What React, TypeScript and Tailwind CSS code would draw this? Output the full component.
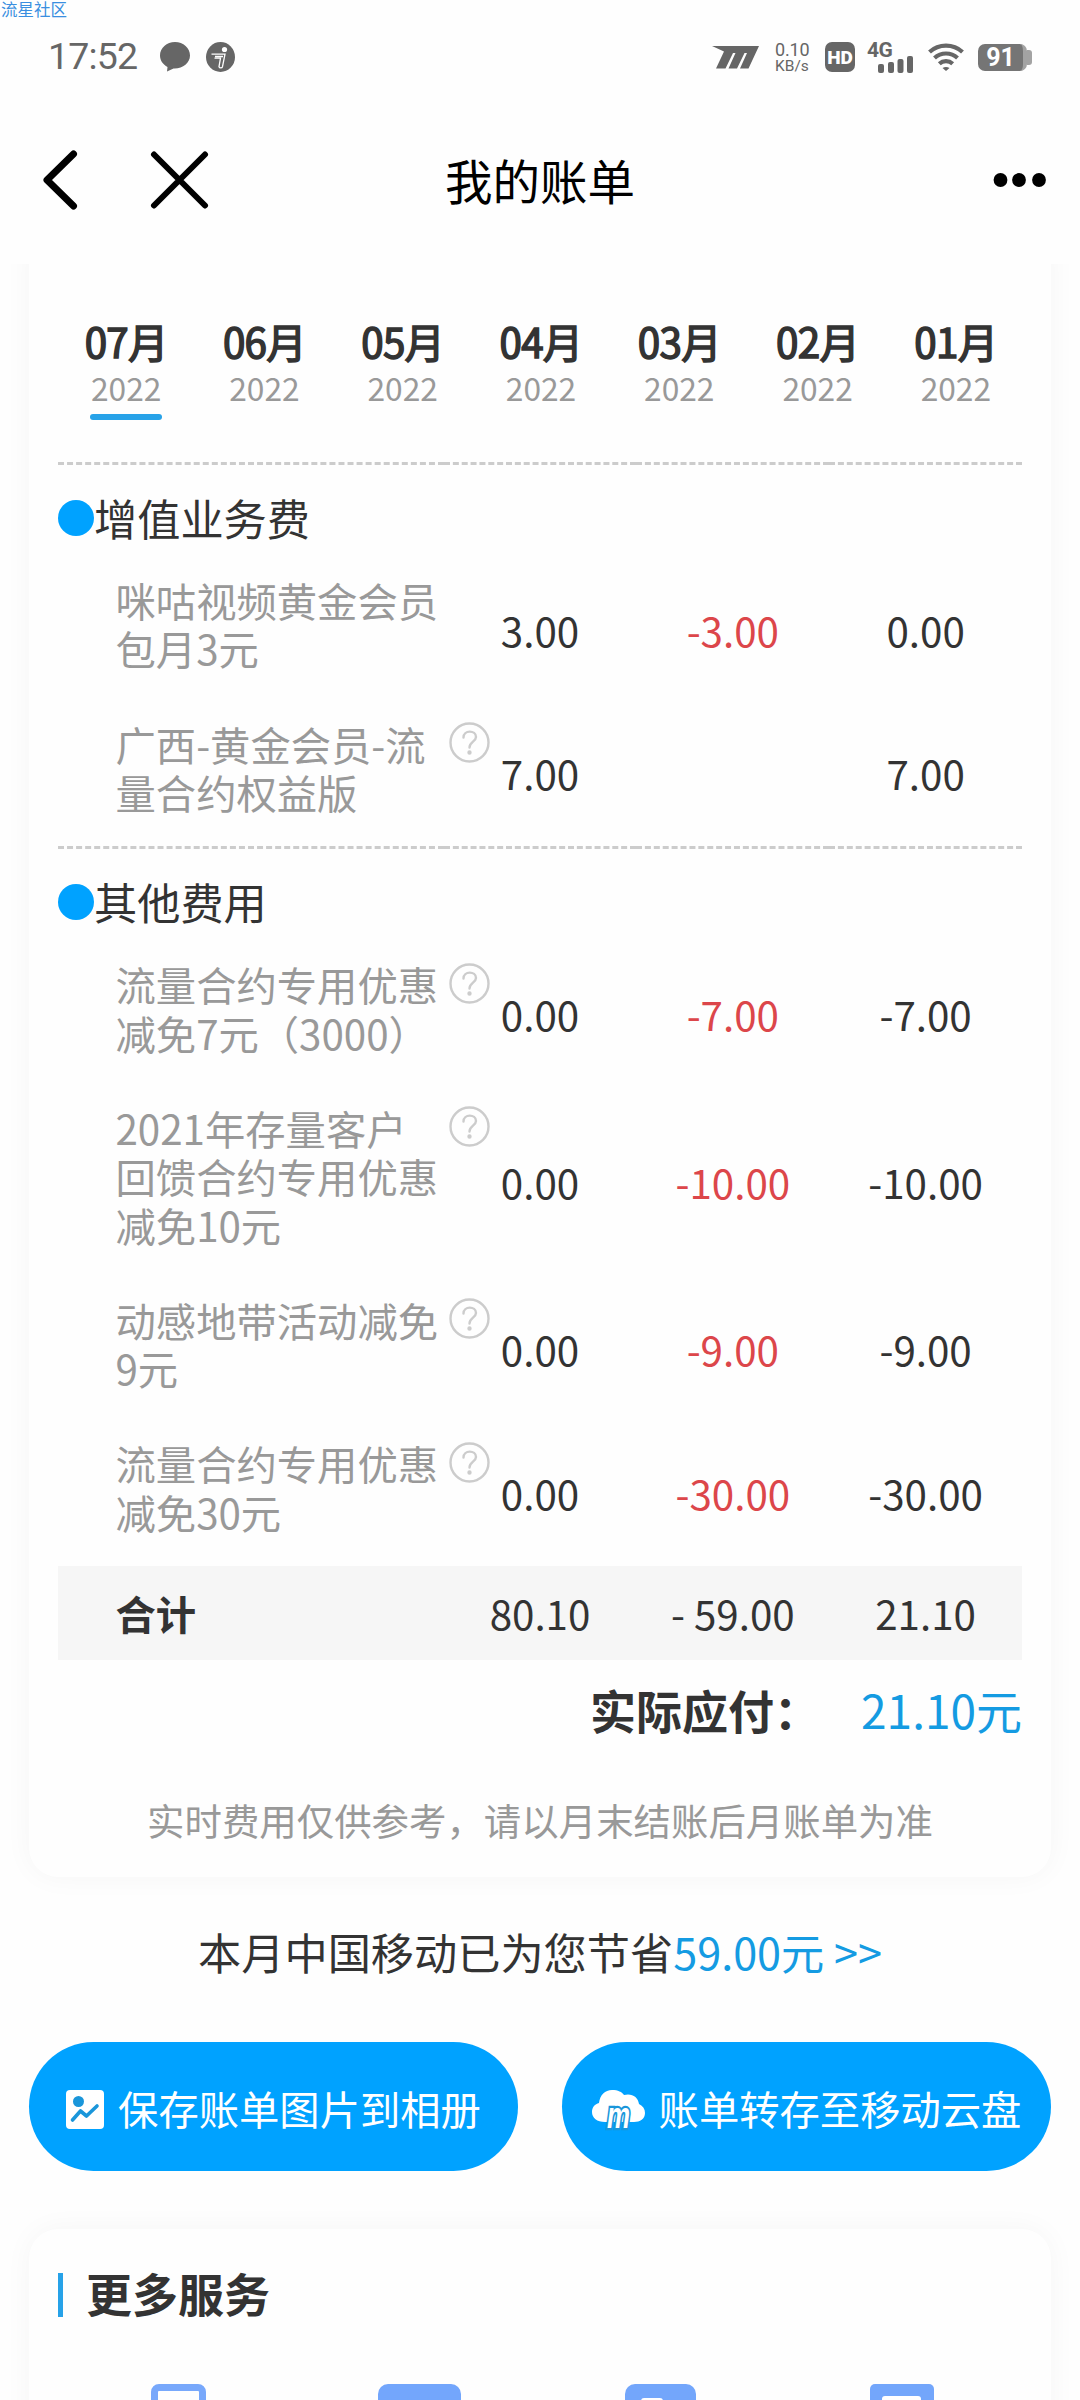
import React from 'react';

interface BillItem {
    name: string;
    help?: boolean;
    amount: string;
    discount?: string;
    actual: string;
}

interface BillSection {
    title: string;
    items: BillItem[];
}

const MONTHS = ['07', '06', '05', '04', '03', '02', '01'];

const SECTIONS: BillSection[] = [
    {
        title: '增值业务费',
        items: [
            { name: '咪咕视频黄金会员包月3元', amount: '3.00', discount: '-3.00', actual: '0.00' },
            { name: '广西-黄金会员-流量合约权益版', help: true, amount: '7.00', actual: '7.00' },
        ],
    },
    {
        title: '其他费用',
        items: [
            { name: '流量合约专用优惠减免7元（3000）', help: true, amount: '0.00', discount: '-7.00', actual: '-7.00' },
            { name: '2021年存量客户回馈合约专用优惠减免10元', help: true, amount: '0.00', discount: '-10.00', actual: '-10.00' },
            { name: '动感地带活动减免9元', help: true, amount: '0.00', discount: '-9.00', actual: '-9.00' },
            { name: '流量合约专用优惠减免30元', help: true, amount: '0.00', discount: '-30.00', actual: '-30.00' },
        ],
    },
];

function StatusBar() {
    return (
        <div className="h-[114px] shrink-0 px-[48px] flex items-center justify-between text-[#666]">
            <div className="flex items-center">
                <span className="w-[112px] font-['Roboto',sans-serif] text-[37.500px] leading-none tracking-[-0.8px]">17:52</span>
                <svg className="w-[30px] h-[30px]" viewBox="0 0 30 30" fill="currentColor">
                    <path d="M15 0C6.700 0 0 6 0 13.500c0 5 3 9 7.500 11.500L7 29.500l6.500-3C22.500 27 30 21 30 13.500 30 6 23.300 0 15 0Z" />
                </svg>
                <svg className="ml-[16px] w-[29px] h-[30px]" viewBox="0 0 29 30">
                    <ellipse cx="14.500" cy="15" rx="14.500" ry="15" fill="#666" />
                    <circle cx="18.500" cy="7.500" r="2.600" fill="#fff" />
                    <path d="M5.500 12.200h13.500l-2.500 12.500c-.500 1.500-3 1.500-3.500 0l1.500-8.500H8.500M9 14.500h8" fill="none" stroke="#fff" strokeWidth="1.300" />
                </svg>
            </div>

            <div className="flex items-center">
                <svg className="w-[47px] h-[23px]" viewBox="0 0 47 23" fill="currentColor">
                    <path d="M0 0h47l-10.500 22.500h-8.500L35 7h-2.500l-7.500 15.500h-8.500L23.500 7H21l-7.500 15.500H4L12 5.500Z" />
                </svg>
                <div className="ml-[16px] w-[37px] flex flex-col font-['Roboto',sans-serif] leading-none">
                    <span className="text-[18px] leading-[17px] tracking-[-0.2px]">0.10</span>
                    <span className="text-[15.500px] leading-[16px] whitespace-nowrap">KB/s</span>
                </div>
                <span className="ml-[13px] w-[30px] h-[30px] rounded-[7px] bg-[#666] text-white text-[19px] leading-none font-black font-['Roboto',sans-serif] flex items-center justify-center">
                    HD
                </span>
                <div className="relative ml-[12px] w-[48px] h-[31px]">
                    <span className="absolute left-0 top-[-2px] font-['Roboto',sans-serif] font-bold text-[21px] leading-none tracking-[-0.5px]">4G</span>
                    <svg className="absolute left-[11px] top-[14px] w-[36px] h-[17px]" viewBox="0 0 36 17" fill="currentColor">
                        <rect x="0" y="8" width="6" height="9" rx="2" />
                        <rect x="10" y="6" width="6" height="11" rx="2" />
                        <rect x="19.500" y="3" width="6" height="14" rx="2" />
                        <rect x="29" y="0" width="6" height="17" rx="2" />
                    </svg>
                </div>
                <svg className="ml-[13px] w-[36px] h-[28px]" viewBox="0 0 36 28" fill="none" stroke="currentColor" strokeWidth="4.200">
                    <path d="M1.500 9a24.500 24.500 0 0 1 33 0" />
                    <path d="M6.500 15a17 17 0 0 1 23 0" />
                    <path d="M11.300 20.800a10 10 0 0 1 13.400 0" />
                    <path d="M14.500 25q3.500-2 7 0L18 28Z" fill="currentColor" stroke="none" />
                </svg>
                <div className="ml-[14px] flex items-center">
                    <div className="w-[49px] h-[27px] rounded-[7px] border-r-[4px] border-[#a3a3a3] bg-[#757575] text-white font-['Roboto',sans-serif] font-bold text-[25px] leading-none flex items-center justify-center">
                        91
                    </div>
                    <span className="w-[5px] h-[15px] rounded-r-[3px] bg-[#a3a3a3]" />
                </div>
            </div>
        </div>
    );
}

function NavBar() {
    return (
        <header className="h-[150px] shrink-0 px-[40px] grid grid-cols-3 items-center text-black">
            <div className="flex items-center gap-[69px] pb-[18px]">
                <svg className="w-[40px] h-[60px]" viewBox="0 0 40 60" fill="none" stroke="currentColor" strokeWidth="7" strokeLinecap="round" strokeLinejoin="round">
                    <path d="M33.500 4 7 30l26.500 26" />
                </svg>
                <svg className="w-[60px] h-[60px]" viewBox="0 0 60 60" fill="none" stroke="currentColor" strokeWidth="6" strokeLinecap="round">
                    <path d="M5 4.500l51 51M56 4.500l-51 51" />
                </svg>
            </div>
            <h1 className="text-center text-[47.500px] leading-[60px] pb-[19px]">我的账单</h1>
            <div className="flex justify-end pb-[19px]">
                <svg className="w-[54px] h-[16px] -mr-[6px]" viewBox="0 0 54 16" fill="currentColor">
                    <circle cx="8.500" cy="8" r="6.900" />
                    <circle cx="27" cy="8" r="6.900" />
                    <circle cx="47" cy="8" r="6.900" />
                </svg>
            </div>
        </header>
    );
}

function HelpIcon() {
    return (
        <svg className="mt-[2.500px] w-[41px] h-[41px] shrink-0" viewBox="0 0 41 41" fill="none" stroke="#ccc" strokeWidth="2.400" strokeLinecap="round">
            <circle cx="20.500" cy="20.500" r="19" />
            <path d="M14.500 15.500c0-8 12.500-7.500 12.500-.5 0 4.500-6.500 5-6.500 10.500" />
            <circle cx="20.500" cy="30.500" r="1" fill="#ccc" />
        </svg>
    );
}

function BillRow({ item }: { item: BillItem }) {
    return (
        <div className="grid grid-cols-5 items-center pt-[21.400px] pb-[25.400px]">
            <div className="col-span-2 self-start flex gap-[10px] pl-[57.500px] text-[#999]">
                <span className="w-[323px] shrink-0 text-[40.320px] leading-[48.400px]">{item.name}</span>
                {item.help && <HelpIcon />}
            </div>
            <span className="text-center text-[40.320px] pt-[11px]">{item.amount}</span>
            <span className="text-center text-[40.320px] pt-[11px] text-[#dc464a]">{item.discount}</span>
            <span className="text-center text-[40.320px] pt-[11px]">{item.actual}</span>
        </div>
    );
}

// One dashed segment per table column
function DashedLine() {
    return (
        <div className="grid grid-cols-5">
            <i className="col-span-2 border-t-[3px] border-dashed border-[#ccc]" />
            <i className="border-t-[3px] border-dashed border-[#ccc]" />
            <i className="border-t-[3px] border-dashed border-[#ccc]" />
            <i className="border-t-[3px] border-dashed border-[#ccc]" />
        </div>
    );
}

export default function App() {
    return (
        <div className="relative w-[1080px] h-[2400px] overflow-hidden flex flex-col bg-[#fefefe] text-[#333] font-['Noto_Sans_CJK_SC',sans-serif]">
            <span className="absolute left-[1px] top-0 text-[16.500px] leading-[18px] text-[#3a8fe0]">流星社区</span>
            <StatusBar />
            <NavBar />

            <main className="flex-1 overflow-hidden px-[29px]">
                <section className="-mt-[40px] pt-[40px] h-[1653px] px-[29px] flex flex-col rounded-[29px] bg-[#fefefe] shadow-[0_0_29px_rgba(0,0,0,0.04)]">
                    <div className="h-[198px] shrink-0 -ml-[1px] -mr-[3px] pt-[53px] grid grid-cols-7">
                        {MONTHS.map((month, index) => (
                            <div key={month} className="flex flex-col items-center">
                                <span className="text-[40.320px] leading-[48px] tracking-[-0.7px] [-webkit-text-stroke:1.500px_#333]">{month}月</span>
                                <span className="text-[31.700px] leading-[44px] text-[#999]">2022</span>
                                {index === 0 && <i className="mt-[5px] w-[72px] h-[6px] rounded-full bg-[#27a2e8]" />}
                            </div>
                        ))}
                    </div>

                    {SECTIONS.map((section) => (
                        <div key={section.title} className="pb-[4.400px]">
                            <DashedLine />
                            <div className="h-[89.600px] flex items-center pt-[17px]">
                                <i className="w-[36px] h-[36px] rounded-full bg-[#00a2ff]" />
                                <h2 className="pb-[3px] text-[43.200px] leading-[60px]">{section.title}</h2>
                            </div>
                            {section.items.map((item) => (
                                <BillRow key={item.name} item={item} />
                            ))}
                        </div>
                    ))}

                    <div className="h-[94.500px] shrink-0 grid grid-cols-5 items-center bg-[#f6f6f6] text-[40.320px]">
                        <span className="col-span-2 pl-[57.500px] font-bold">合计</span>
                        <span className="text-center">80.10</span>
                        <span className="text-center">- 59.00</span>
                        <span className="text-center">21.10</span>
                    </div>

                    <div className="h-[104px] shrink-0 pb-[5px] flex items-center justify-end text-[46px]">
                        <strong>实际应付：</strong>
                        <span className="ml-[41px] text-[#149be2]">21.10元</span>
                    </div>
                    <p className="pt-[28px] text-center text-[37.440px] leading-[56px] text-[#999]">实时费用仅供参考，请以月末结账后月账单为准</p>
                </section>

                <p className="h-[165px] pt-[43px] text-center text-[43.200px] leading-[62px]">
                    本月中国移动已为您节省<span className="text-[#149be2]">59.00元 &gt;&gt;</span>
                </p>

                <div className="flex justify-between text-white text-[40.320px] whitespace-nowrap">
                    <button className="w-[489px] h-[129px] pt-[3px] rounded-full bg-[#00a2ff] flex items-center justify-center gap-[14px]">
                        <svg className="mt-[3px] w-[38px] h-[39px]" viewBox="0 0 38 39">
                            <rect width="38" height="39" rx="4" fill="#fff" />
                            <circle cx="12.500" cy="11.500" r="5.500" fill="#1a96da" />
                            <path d="M6.500 30l8-9 6 5L31 16" fill="none" stroke="#1a96da" strokeWidth="3.600" strokeLinecap="round" strokeLinejoin="round" />
                        </svg>
                        <span>保存账单图片到相册</span>
                    </button>
                    <button className="w-[489px] h-[129px] pt-[3px] rounded-full bg-[#00a2ff] flex items-center justify-center gap-[14px]">
                        <svg className="mt-[3px] w-[53px] h-[39px] overflow-visible" viewBox="0 0 53 39">
                            <path d="M13 32C5 32 0 28 0 22c0-5 3-8 7-9C8 5 13 0 20 0c6 0 10 2 12 5 8-2 14 2 15 9 4 2 6 5 6 9 0 6-5 9-11 9Z" fill="#fff" />
                            <text x="15" y="38" textLength="23" lengthAdjust="spacingAndGlyphs" fontFamily="Liberation Sans, sans-serif" fontStyle="italic" fontWeight="700" fontSize="36" fill="#fff" stroke="#1a96da" strokeWidth="4.500" paintOrder="stroke">m</text>
                        </svg>
                        <span>账单转存至移动云盘</span>
                    </button>
                </div>

                <section className="mt-[58px] h-[400px] px-[29px] rounded-[29px] bg-[#fefefe] shadow-[0_0_29px_rgba(0,0,0,0.04)]">
                    <div className="h-[155px] pt-[22px] flex items-center pb-[45px]">
                        <i className="w-[5px] h-[44px] bg-[#27a2e8]" />
                        <h2 className="ml-[23px] pb-[7px] text-[46px] leading-[60px] font-bold">更多服务</h2>
                    </div>
                    <div className="grid grid-cols-4 justify-items-center">
                        <i className="w-[55px] h-[80px] rounded-[8px] border-[7px] border-[#78a8fb]" />
                        <i className="w-[83px] h-[80px] rounded-[10px] bg-[#73a6fc]" />
                        <div className="w-[71px] h-[80px] rounded-[10px] bg-[#73a6fb] pt-[14px] pl-[16px]">
                            <i className="block w-[22px] h-[30px] rounded-[3px] bg-white" />
                        </div>
                        <div className="w-[64px] h-[80px] rounded-[5px] bg-[#73a6fb] pt-[12px]">
                            <i className="block mx-auto w-[39px] h-[30px] rounded-[3px] bg-white" />
                        </div>
                    </div>
                </section>
            </main>
        </div>
    );
}
